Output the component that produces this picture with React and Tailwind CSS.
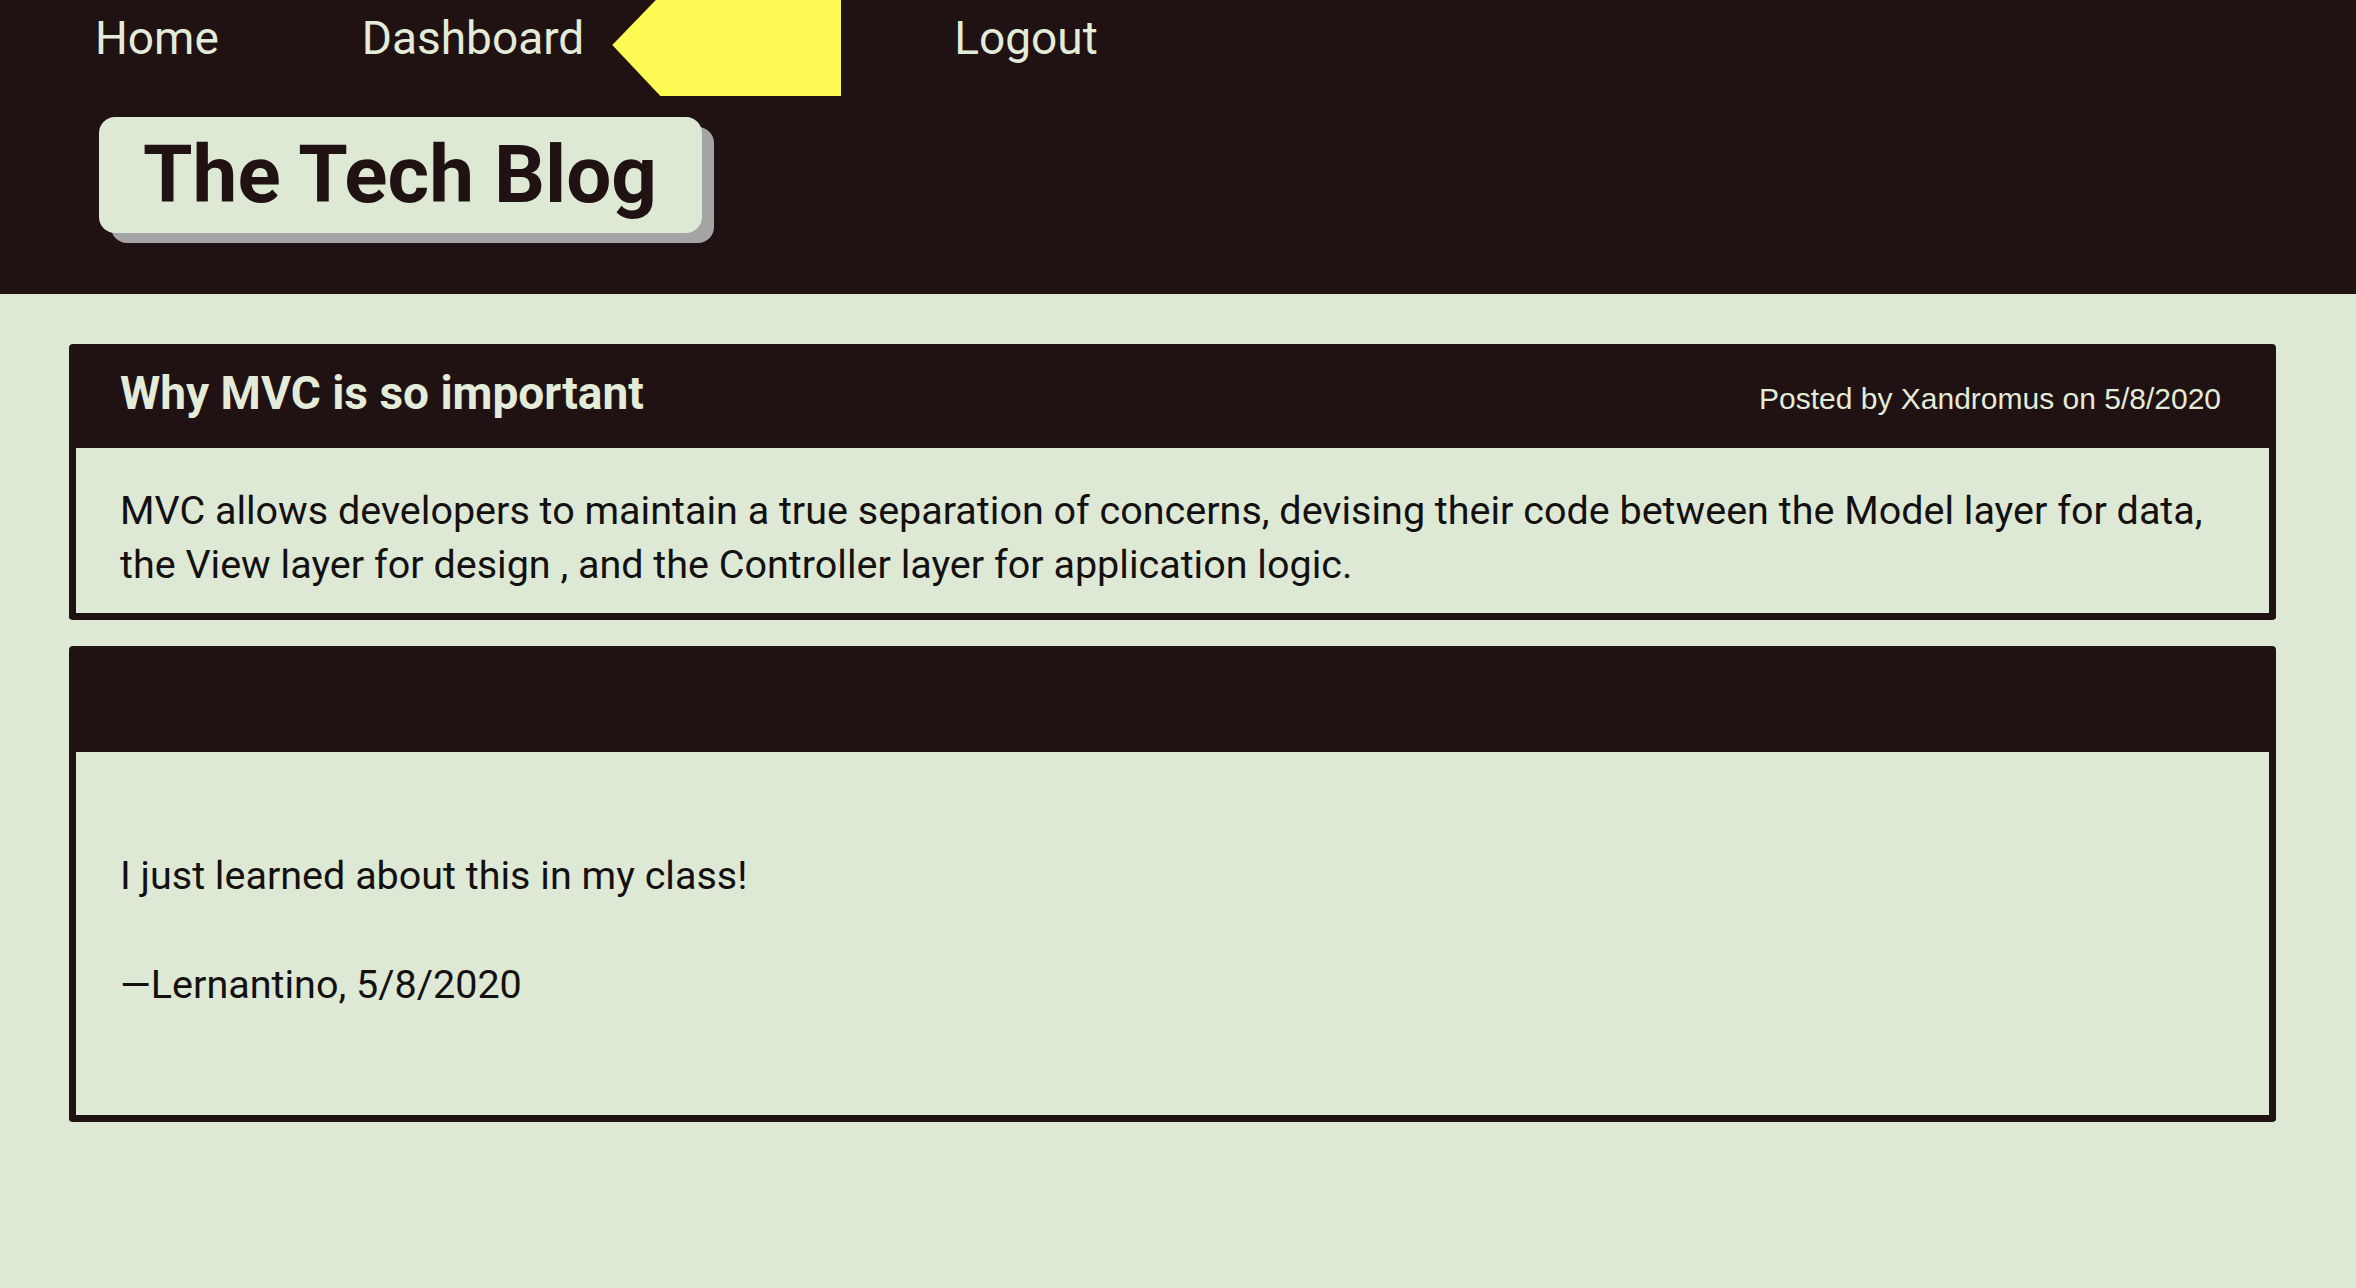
import React from 'react';

const posts = [
  {
    id: 1,
    title: 'Why MVC is so important',
    meta: 'Posted by Xandromus on 5/8/2020',
    body: 'MVC allows developers to maintain a true separation of concerns, devising their code between the Model layer for data, the View layer for design , and the Controller layer for application logic.',
  },
];

const App = () => {
  return (
    <div className="min-h-screen bg-[#dde9d5] font-['Roboto',sans-serif] text-[#141010]">
      {/* Header */}
      <header className="h-[294px] bg-[#201112]">
        <nav className="flex h-[96px] items-start text-[46px] leading-[76px] text-[#e3ecd9]">
          <a className="ml-[95px]">Home</a>
          <a className="ml-[143px]">Dashboard</a>
          <span className="ml-[28px] h-[96px] w-[229px] bg-[#fffb55] [clip-path:polygon(0_47%,19%_0,100%_0,100%_100%,21%_100%)]" />
          <a className="ml-[113px]">Logout</a>
        </nav>
        <div className="ml-[99px] mt-[21px] flex h-[116px] w-[603px] items-center rounded-[16px] bg-[#dde9d5] px-[44px] shadow-[12px_10px_0_#a4a4a4]">
          <h1 className="whitespace-nowrap text-[80px] font-bold leading-none text-[#201112]">The Tech Blog</h1>
        </div>
      </header>

      {/* Posts */}
      <main className="ml-[69px] mt-[50px] flex w-[2207px] flex-col gap-[26px]">
        {posts.map((post) => (
          <article key={post.id} className="rounded-[4px] border-[7px] border-t-0 border-[#201112]">
            <div className="flex h-[104px] items-baseline justify-between bg-[#201112] pl-[44px] pr-[48px] pt-[21px]">
              <h2 className="text-[46px] font-bold leading-[56px] text-[#e3ecd9]">{post.title}</h2>
              <span className="font-['Liberation_Sans',sans-serif] text-[30px] text-[#e3ecd9]">{post.meta}</span>
            </div>
            <p className="pl-[44px] pr-[28px] pb-[21px] pt-[36px] text-[39.5px] leading-[54px]">{post.body}</p>
          </article>
        ))}

        <article className="rounded-[4px] border-[7px] border-t-0 border-[#201112]">
          <div className="h-[106px] bg-[#201112]" />
          <div className="flex flex-col gap-[55px] px-[44px] pb-[103px] pt-[97px] text-[39.5px] leading-[54px]">
            <p>I just learned about this in my class!</p>
            <p>—Lernantino, 5/8/2020</p>
          </div>
        </article>
      </main>
    </div>
  );
};

export default App;
